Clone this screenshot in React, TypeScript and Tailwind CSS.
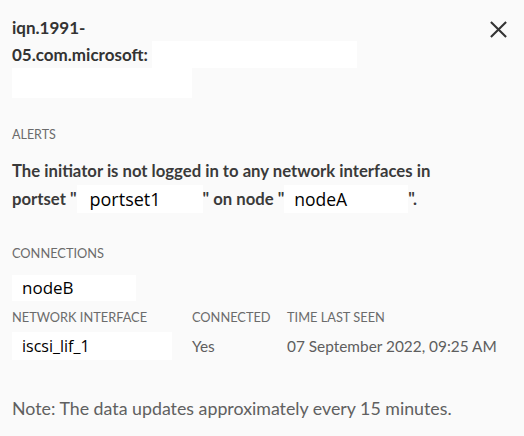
export default function App() {
  return (
    <div className="w-[524px] h-[436px] bg-[#fafafa] text-[#333] font-['Lato',sans-serif] px-3 pt-[14px] overflow-hidden">
      {/* Header */}
      <div className="flex items-start justify-between">
        <div className="text-[17px] font-bold leading-[27px]">
          <div>iqn.1991-</div>
          <div className="flex">
            <span>05.com.microsoft:</span>
            <span className="bg-white w-[205px] ml-1" />
          </div>
          <div className="bg-white w-[180px] h-[30px]" />
        </div>
        <button className="mt-[6px] mr-[4px] text-[#333]">
          <svg width="19" height="19" viewBox="0 0 20 20" fill="none" stroke="currentColor" strokeWidth="2.2">
            <path d="M2 2 L18 18 M18 2 L2 18" />
          </svg>
        </button>
      </div>

      {/* Alerts */}
      <div className="mt-[28px] text-[12.5px] text-[#6b6b6b]">ALERTS</div>
      <div className="mt-[12px] text-[16.7px] font-bold text-[#3a3a3a] leading-[28px]">
        <div>The initiator is not logged in to any network interfaces in</div>
        <div className="flex items-center">
          <span>portset "</span>
          <span className="bg-white font-['Open_Sans',sans-serif] font-normal text-black text-[18px] w-[126px] pl-[13px]">portset1</span>
          <span>" on node "</span>
          <span className="bg-white font-['Open_Sans',sans-serif] font-normal text-black text-[17.5px] w-[124px] pl-[10px]">nodeA</span>
          <span>".</span>
        </div>
      </div>

      {/* Connections */}
      <div className="mt-[31px] text-[12.8px] text-[#6b6b6b]">CONNECTIONS</div>
      <div className="mt-[12px] bg-white w-[124px] pl-[10px] font-['Open_Sans',sans-serif] text-[17px] text-black leading-[26px]">nodeB</div>
      <div className="flex text-[12.8px] text-[#6b6b6b] mt-[7px]">
        <div className="w-[180px]">NETWORK INTERFACE</div>
        <div className="w-[95px]">CONNECTED</div>
        <div>TIME LAST SEEN</div>
      </div>
      <div className="flex items-center mt-[5px] text-[15.4px] text-[#5e5e5e]">
        <div className="w-[180px]">
          <span className="block bg-white w-[160px] pl-[10px] font-['Open_Sans',sans-serif] text-[16px] text-black leading-[28px]">iscsi_lif_1</span>
        </div>
        <div className="w-[95px]">Yes</div>
        <div>07 September 2022, 09:25 AM</div>
      </div>

      {/* Note */}
      <div className="mt-[35px] text-[17.8px] text-[#606060]">
        Note: The data updates approximately every 15 minutes.
      </div>
    </div>
  )
}
